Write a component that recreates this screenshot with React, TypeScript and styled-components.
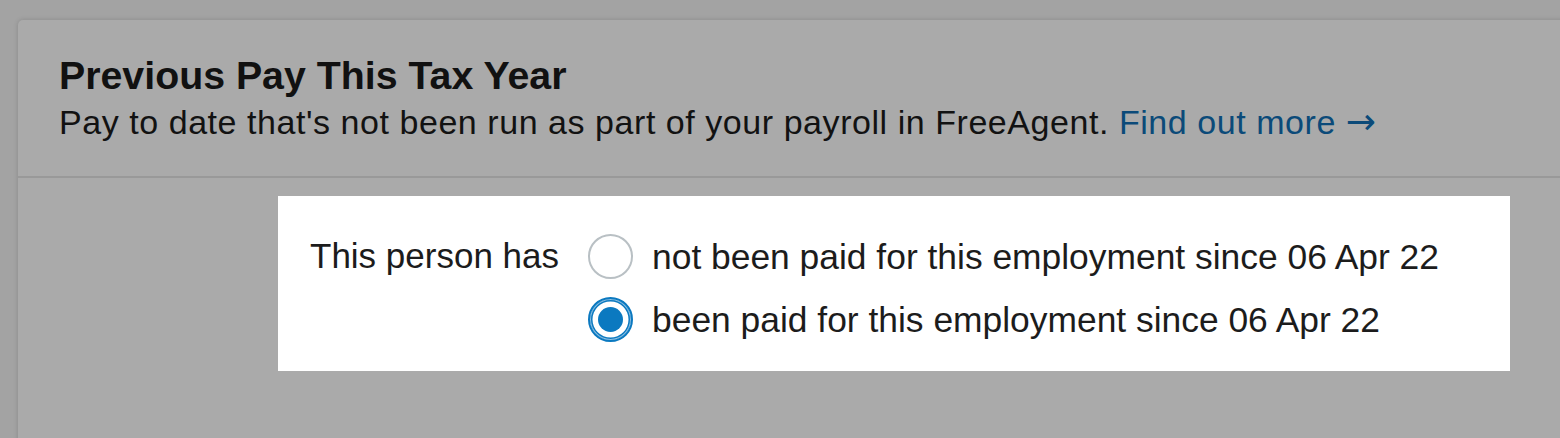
import React from 'react'
import styled, { createGlobalStyle } from 'styled-components'

const GlobalStyle = createGlobalStyle`
  html, body {
    margin: 0;
    padding: 0;
    background: #a3a3a3;
    overflow: hidden;
    font-family: 'Liberation Sans', Arial, Helvetica, sans-serif;
  }
`

const Page = styled.div`
  padding: 20px 0 0 18px;
  height: 438px;
  box-sizing: border-box;
  overflow: hidden;
`

const Card = styled.section`
  background: #aaaaaa;
  border-radius: 5px;
  box-shadow: 0 0 5px rgba(0, 0, 0, 0.16);
  margin-right: -20px;
  min-height: 460px;
`

const Header = styled.header`
  padding: 32px 41px 34px;
  border-bottom: 2px solid #999999;
`

const Title = styled.h2`
  margin: 0;
  font-size: 39.3px;
  line-height: 46px;
  font-weight: 700;
  color: #111111;
`

const Subtitle = styled.p`
  margin: 4px 0 0;
  font-size: 34px;
  letter-spacing: 0.55px;
  line-height: 40px;
  color: #121212;
`

const MoreLink = styled.a`
  color: #0b4a79;
  text-decoration: none;
`

const Arrow = styled.span`
  font-family: 'DejaVu Sans', sans-serif;
  font-size: 36px;
  letter-spacing: 0;
`

const Body = styled.div`
  padding: 18px 0 0 260px;
`

const Highlight = styled.div`
  width: 1232px;
  height: 175px;
  box-sizing: border-box;
  background: #ffffff;
  padding: 38px 32px 31px;
  display: grid;
  grid-template-columns: auto 1fr;
  column-gap: 29px;
  align-items: start;
`

const FieldLabel = styled.span`
  font-size: 35px;
  line-height: 44px;
  color: #1c1c1c;
`

const Options = styled.div`
  display: flex;
  flex-direction: column;
  gap: 18px;
`

const Option = styled.label`
  display: flex;
  align-items: center;
  gap: 19px;
  font-size: 35.4px;
  line-height: 44px;
  color: #1c1c1c;
`

const Radio = styled.span<{ checked?: boolean }>`
  flex: none;
  width: 45px;
  height: 45px;
  border-radius: 50%;
  box-sizing: border-box;
  border: 2px solid ${(p) => (p.checked ? '#0b79c0' : '#b9c0c4')};
  box-shadow: ${(p) =>
    p.checked ? 'inset 0 0 0 1px #8fc1e3, inset 0 0 0 2.5px #0b79c0' : 'none'};
  display: flex;
  align-items: center;
  justify-content: center;
  background: #ffffff;
  &::after {
    content: '';
    display: ${(p) => (p.checked ? 'block' : 'none')};
    width: 25px;
    height: 25px;
    border-radius: 50%;
    background: #0b79c0;
  }
`

const choices = [
  { text: 'not been paid for this employment since 06 Apr 22', checked: false },
  { text: 'been paid for this employment since 06 Apr 22', checked: true },
]

export default function App() {
  return (
    <>
      <GlobalStyle />
      <Page>
        <Card>
          <Header>
            <Title>Previous Pay This Tax Year</Title>
            <Subtitle>
              Pay to date that's not been run as part of your payroll in FreeAgent.{' '}
              <MoreLink href="#">
                Find out more <Arrow>→</Arrow>
              </MoreLink>
            </Subtitle>
          </Header>
          <Body>
            <Highlight>
              <FieldLabel>This person has</FieldLabel>
              <Options>
                {choices.map((c) => (
                  <Option key={c.text}>
                    <Radio checked={c.checked} />
                    {c.text}
                  </Option>
                ))}
              </Options>
            </Highlight>
          </Body>
        </Card>
      </Page>
    </>
  )
}
